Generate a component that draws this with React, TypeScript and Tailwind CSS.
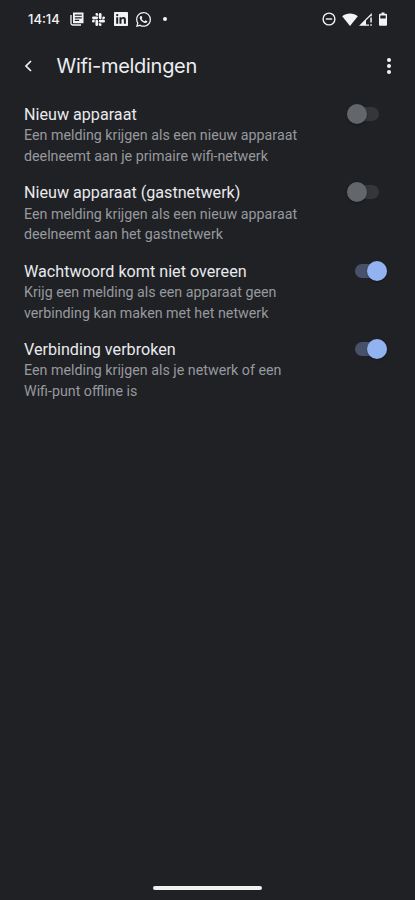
import React from "react";

type Setting = { title: string; lines: string[]; on: boolean };

const settings: Setting[] = [
  {
    title: "Nieuw apparaat",
    lines: ["Een melding krijgen als een nieuw apparaat", "deelneemt aan je primaire wifi-netwerk"],
    on: false,
  },
  {
    title: "Nieuw apparaat (gastnetwerk)",
    lines: ["Een melding krijgen als een nieuw apparaat", "deelneemt aan het gastnetwerk"],
    on: false,
  },
  {
    title: "Wachtwoord komt niet overeen",
    lines: ["Krijg een melding als een apparaat geen", "verbinding kan maken met het netwerk"],
    on: true,
  },
  {
    title: "Verbinding verbroken",
    lines: ["Een melding krijgen als je netwerk of een", "Wifi-punt offline is"],
    on: true,
  },
];

function NewsIcon() {
  return (
    <svg className="h-[14px] w-[14px]" viewBox="0 0 14 14" fill="none">
      <path d="M1 3v8.2Q1 13 2.8 13H11" stroke="#f1f3f4" strokeWidth="1.3" />
      <path
        fill="#f1f3f4"
        fillRule="evenodd"
        d="M3 .5h10.5v10.8H3zM4.8 2.6v1.2h7V2.6zM4.8 5.3v1.1h7V5.3zM4.8 7.8v1.1h4.4V7.8z"
      />
    </svg>
  );
}

function SlackIcon() {
  return (
    <svg className="h-[13px] w-[13px]" viewBox="0 0 24 24" fill="#f1f3f4">
      <path d="M5.042 15.165a2.528 2.528 0 0 1-2.52 2.523A2.528 2.528 0 0 1 0 15.165a2.527 2.527 0 0 1 2.522-2.52h2.52v2.52zM6.313 15.165a2.527 2.527 0 0 1 2.521-2.52 2.527 2.527 0 0 1 2.521 2.52v6.313A2.528 2.528 0 0 1 8.834 24a2.528 2.528 0 0 1-2.521-2.522v-6.313zM8.834 5.042a2.528 2.528 0 0 1-2.521-2.52A2.528 2.528 0 0 1 8.834 0a2.528 2.528 0 0 1 2.521 2.522v2.52H8.834zM8.834 6.313a2.528 2.528 0 0 1 2.521 2.521 2.528 2.528 0 0 1-2.521 2.521H2.522A2.528 2.528 0 0 1 0 8.834a2.528 2.528 0 0 1 2.522-2.521h6.312zM18.956 8.834a2.528 2.528 0 0 1 2.522-2.521A2.528 2.528 0 0 1 24 8.834a2.528 2.528 0 0 1-2.522 2.521h-2.522V8.834zM17.688 8.834a2.528 2.528 0 0 1-2.523 2.521 2.527 2.527 0 0 1-2.52-2.521V2.522A2.527 2.527 0 0 1 15.165 0a2.528 2.528 0 0 1 2.523 2.522v6.312zM15.165 18.956a2.528 2.528 0 0 1 2.523 2.522A2.528 2.528 0 0 1 15.165 24a2.527 2.527 0 0 1-2.52-2.522v-2.522h2.52zM15.165 17.688a2.527 2.527 0 0 1-2.52-2.523 2.526 2.526 0 0 1 2.52-2.52h6.313A2.527 2.527 0 0 1 24 15.165a2.528 2.528 0 0 1-2.522 2.523h-6.313z" />
    </svg>
  );
}

function LinkedInIcon() {
  return (
    <svg className="h-[14px] w-[14px]" viewBox="0 0 14 14">
      <rect width="14" height="14" rx="0.8" fill="#f1f3f4" />
      <g fill="#202125">
        <circle cx="3.2" cy="3.1" r="1.15" />
        <path d="M2.2 5.2h2v6.6h-2zM5.5 5.2h1.9v.9c.4-.7 1.1-1.1 2-1.1 1.9 0 2.5 1.2 2.5 3.1v3.7h-2V8.4c0-1-.2-1.7-1.1-1.7-1 0-1.3.8-1.3 1.8v3.3h-2z" />
      </g>
    </svg>
  );
}

function WhatsAppIcon() {
  return (
    <svg className="h-[15px] w-[15px]" viewBox="0 0 24 24" fill="#f1f3f4">
      <path d="M17.472 14.382c-.297-.149-1.758-.867-2.03-.967-.273-.099-.471-.148-.67.15-.197.297-.767.966-.94 1.164-.173.199-.347.223-.644.075-.297-.15-1.255-.463-2.39-1.475-.883-.788-1.48-1.761-1.653-2.059-.173-.297-.018-.458.13-.606.134-.133.298-.347.446-.52.149-.174.198-.298.298-.497.099-.198.05-.371-.025-.52-.075-.149-.669-1.612-.916-2.207-.242-.579-.487-.5-.669-.51-.173-.008-.371-.01-.57-.01-.198 0-.52.074-.792.372-.272.297-1.04 1.016-1.04 2.479 0 1.462 1.065 2.875 1.213 3.074.149.198 2.096 3.2 5.077 4.487.709.306 1.262.489 1.694.625.712.227 1.36.195 1.871.118.571-.085 1.758-.719 2.006-1.413.248-.694.248-1.289.173-1.413-.074-.124-.272-.198-.57-.347m-5.421 7.403h-.004a9.87 9.87 0 0 1-5.031-1.378l-.361-.214-3.741.982.998-3.648-.235-.374a9.86 9.86 0 0 1-1.51-5.26c.001-5.45 4.436-9.884 9.888-9.884 2.64 0 5.122 1.03 6.988 2.898a9.825 9.825 0 0 1 2.893 6.994c-.003 5.45-4.437 9.884-9.885 9.884m8.413-18.297A11.815 11.815 0 0 0 12.05 0C5.495 0 .16 5.335.157 11.892c0 2.096.547 4.142 1.588 5.945L.057 24l6.305-1.654a11.882 11.882 0 0 0 5.683 1.448h.005c6.554 0 11.89-5.335 11.893-11.893a11.821 11.821 0 0 0-3.48-8.413z" />
    </svg>
  );
}

function StatusBar() {
  return (
    <div className="flex h-[38px] items-center pl-[28px] pr-[28px]">
      <span className="w-[42px] whitespace-nowrap font-['Inter',sans-serif] text-[13px] font-medium leading-[38px] text-[#f1f3f4]">
        14:14
      </span>
      <NewsIcon />
      <div className="ml-[8px]"><SlackIcon /></div>
      <div className="ml-[9px]"><LinkedInIcon /></div>
      <div className="ml-[8px]"><WhatsAppIcon /></div>
      <div className="ml-[12px] h-[4px] w-[4px] rounded-full bg-[#f1f3f4]" />
      <svg className="ml-auto h-[14px] w-[14px]" viewBox="0 0 14 14" fill="none" stroke="#f1f3f4" strokeWidth="1.4">
        <circle cx="7" cy="7" r="5.9" />
        <path d="M3.8 7h6.4" />
      </svg>
      <svg className="ml-[6px] h-[13px] w-[16px]" viewBox="0 0 16 13" fill="#f1f3f4">
        <path d="M.2 3.3C4.6-.5 11.4-.5 15.8 3.3L8 12.9z" />
      </svg>
      <svg className="ml-px h-[13px] w-[13px]" viewBox="0 0 13 13" fill="#f1f3f4">
        <path d="M0 12.8L12.8 0v3.2h-1.4L7 7.6v3.8h3v1.4zM11.3 4.6h1.5v5h-1.5zM11.3 11.2h1.5v1.6h-1.5z" />
      </svg>
      <svg className="ml-[7px] h-[14px] w-[8px]" viewBox="0 0 8 14" fill="#f1f3f4">
        <path fillRule="evenodd" d="M2.5 .4h3v1.3H7a1 1 0 0 1 1 1v10a1 1 0 0 1-1 1H1a1 1 0 0 1-1-1v-10a1 1 0 0 1 1-1h1.5zM1.3 3.4V6.4h5.4V3.4z" />
      </svg>
    </div>
  );
}

function Toggle({ on }: { on: boolean }) {
  return (
    <div className={"flex h-[20px] w-[40px] items-center " + (on ? "justify-end" : "justify-start")}>
      <div
        className={
          "flex h-[14px] w-[32px] items-center rounded-full " +
          (on ? "justify-end bg-[#475169]" : "justify-start bg-[#35363a]")
        }
      >
        <div
          className={
            "h-[20px] w-[20px] shrink-0 rounded-full shadow-[0_1px_2px_rgba(0,0,0,0.35)] " +
            (on ? "bg-[#92b2f1]" : "bg-[#63666b]")
          }
        />
      </div>
    </div>
  );
}

export default function App() {
  return (
    <div className="flex h-[900px] w-[415px] flex-col overflow-hidden bg-[#202125] font-['Roboto',sans-serif]">
      <StatusBar />
      <header className="flex h-[56px] items-center pl-[24px] pr-[24px]">
        <svg className="h-[12px] w-[8px]" viewBox="0 0 8 12" fill="none" stroke="#f1f3f4" strokeWidth="1.7">
          <path d="M7 1L2 6l5 5" />
        </svg>
        <h1 className="ml-[24.5px] whitespace-nowrap font-['Inter',sans-serif] text-[20px] leading-[28px] tracking-[-0.3px] text-[#eceef0]">
          Wifi-meldingen
        </h1>
        <div className="ml-auto flex flex-col gap-[2px]">
          <i className="h-[4px] w-[4px] rounded-full bg-[#f1f3f4]" />
          <i className="h-[4px] w-[4px] rounded-full bg-[#f1f3f4]" />
          <i className="h-[4px] w-[4px] rounded-full bg-[#f1f3f4]" />
        </div>
      </header>
      <main className="flex flex-1 flex-col pl-[24px] pr-[28px] pt-[9.8px]">
        {settings.map((s) => (
          <section key={s.title} className="flex h-[78.4px] items-start justify-between">
            <div className="whitespace-nowrap">
              <h2 className="text-[16.15px] leading-[21.4px] text-[#e8eaed]">{s.title}</h2>
              {s.lines.map((l) => (
                <p key={l} className="text-[14.25px] leading-[20.6px] text-[#96999e]">{l}</p>
              ))}
            </div>
            <Toggle on={s.on} />
          </section>
        ))}
      </main>
      <footer className="flex h-[14.5px] justify-center">
        <div className="h-[4px] w-[109px] rounded-full bg-[#f1f1f2]" />
      </footer>
    </div>
  );
}
